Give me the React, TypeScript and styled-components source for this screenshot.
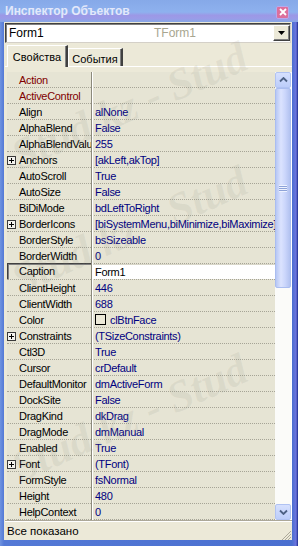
import React from "react";
import styled, { createGlobalStyle, css } from "styled-components";

const GlobalStyle = createGlobalStyle`
  html, body {
    margin: 0;
    padding: 0;
    background: #3b62cc;
  }
  body {
    font-family: "Liberation Sans", Arial, sans-serif;
    font-size: 11px;
  }
`;

type PropRow = {
  name: string;
  value?: string;
  isEvent?: boolean;
  expandable?: boolean;
  selected?: boolean;
  swatch?: boolean;
};

const rows: PropRow[] = [
  { name: "Action", isEvent: true },
  { name: "ActiveControl", isEvent: true },
  { name: "Align", value: "alNone" },
  { name: "AlphaBlend", value: "False" },
  { name: "AlphaBlendValue", value: "255" },
  { name: "Anchors", value: "[akLeft,akTop]", expandable: true },
  { name: "AutoScroll", value: "True" },
  { name: "AutoSize", value: "False" },
  { name: "BiDiMode", value: "bdLeftToRight" },
  {
    name: "BorderIcons",
    value: "[biSystemMenu,biMinimize,biMaximize]",
    expandable: true,
  },
  { name: "BorderStyle", value: "bsSizeable" },
  { name: "BorderWidth", value: "0" },
  { name: "Caption", value: "Form1", selected: true },
  { name: "ClientHeight", value: "446" },
  { name: "ClientWidth", value: "688" },
  { name: "Color", value: "clBtnFace", swatch: true },
  { name: "Constraints", value: "(TSizeConstraints)", expandable: true },
  { name: "Ctl3D", value: "True" },
  { name: "Cursor", value: "crDefault" },
  { name: "DefaultMonitor", value: "dmActiveForm" },
  { name: "DockSite", value: "False" },
  { name: "DragKind", value: "dkDrag" },
  { name: "DragMode", value: "dmManual" },
  { name: "Enabled", value: "True" },
  { name: "Font", value: "(TFont)", expandable: true },
  { name: "FormStyle", value: "fsNormal" },
  { name: "Height", value: "480" },
  { name: "HelpContext", value: "0" },
];

// faint diagonal site watermark baked into the screenshot
const watermarks = [
  { left: 14, top: 158 },
  { left: 14, top: 282 },
  { left: 14, top: 470 },
];

const PlusBox = () => (
  <svg width="9" height="9" viewBox="0 0 9 9">
    <rect x="0.5" y="0.5" width="8" height="8" fill="#f4f3ee" stroke="#3a3a3a" />
    <path d="M2 4.5h5M4.5 2v5" stroke="#000" strokeWidth="1" />
  </svg>
);

const Chevron = ({ down }: { down?: boolean }) => (
  <svg width="9" height="6" viewBox="0 0 9 6">
    <path
      d={down ? "M1 1.5l3.5 3.5 3.5-3.5" : "M1 4.5l3.5-3.5 3.5 3.5"}
      fill="none"
      stroke="#4d6185"
      strokeWidth="1.8"
    />
  </svg>
);

export default function App() {
  return (
    <>
      <GlobalStyle />
      <Window>
        <TitleBar>
          <Title>Инспектор Объектов</Title>
          <CloseButton>
            <svg width="8" height="8" viewBox="0 0 8 8">
              <path d="M1 1l6 6M7 1l-6 6" stroke="#fff" strokeWidth="1.8" />
            </svg>
          </CloseButton>
        </TitleBar>
        <Body>
          <Combo>
            <ComboName>Form1</ComboName>
            <ComboType>TForm1</ComboType>
            <DropButton>
              <svg width="7" height="4" viewBox="0 0 7 4">
                <path d="M0 0h7L3.5 4z" fill="#000" />
              </svg>
            </DropButton>
          </Combo>
          <TabStrip>
            <Tab $active>Свойства</Tab>
            <Tab>События</Tab>
          </TabStrip>
          <Page>
            <Grid>
              <Rows>
                {rows.map((r) => (
                  <Row key={r.name}>
                    <NameCell $selected={r.selected}>
                      <Expander>{r.expandable && <PlusBox />}</Expander>
                      <Name $event={r.isEvent}>{r.name}</Name>
                    </NameCell>
                    <Divider />
                    <ValueCell $selected={r.selected}>
                      {r.swatch && <Swatch />}
                      <Value $selected={r.selected}>{r.value}</Value>
                    </ValueCell>
                  </Row>
                ))}
              </Rows>
              <ScrollBar>
                <ScrollButton>
                  <Chevron />
                </ScrollButton>
                <Thumb>
                  <Grip />
                </Thumb>
                <Track />
                <ScrollButton>
                  <Chevron down />
                </ScrollButton>
              </ScrollBar>
            </Grid>
          </Page>
          <StatusBar>
            Все показано
            <SizeGrip>
              <svg width="10" height="10" viewBox="0 0 10 10">
                <path
                  d="M10 1L1 10M10 4L4 10M10 7L7 10"
                  stroke="#aca899"
                  strokeWidth="1"
                />
              </svg>
            </SizeGrip>
          </StatusBar>
        </Body>
        {watermarks.map((w, i) => (
          <Watermark key={i} style={{ left: w.left, top: w.top }}>
            Stud.kz - Stud
          </Watermark>
        ))}
      </Window>
    </>
  );
}

const Window = styled.div`
  position: relative;
  width: 298px;
  height: 546px;
  display: flex;
  flex-direction: column;
  overflow: hidden;
  background: linear-gradient(90deg, #6f93e0 0, #5479d6 4px, #4a6fd0 292px, #6c74de 296px, #1c2c8a 298px);
`;

const TitleBar = styled.div`
  flex: none;
  height: 22px;
  display: flex;
  align-items: center;
  justify-content: space-between;
  padding: 0 9px 0 5px;
  background: linear-gradient(
    180deg,
    #86a9e8 0%,
    #8eb1ee 55%,
    #9c98e6 70%,
    #9a9ce8 85%,
    #86a8e6 100%
  );
`;

const Title = styled.span`
  font-family: "Liberation Sans", Arial, sans-serif;
  font-weight: bold;
  font-size: 12px;
  color: #e3e8fa;
`;

const CloseButton = styled.div`
  width: 11px;
  height: 11px;
  display: flex;
  align-items: center;
  justify-content: center;
  margin-top: 2px;
  background: #dc6f9c;
  border: 1px solid #b7a8ec;
  border-radius: 2px;
`;

const Body = styled.div`
  flex: 1;
  display: flex;
  flex-direction: column;
  margin: 0 6px 6px 4px;
  padding: 1px 0 0 1px;
  background: #ece9d8;
`;

const Combo = styled.div`
  height: 20px;
  margin-right: 1px;
  display: flex;
  align-items: center;
  box-sizing: border-box;
  background: #fff;
  border-top: 1px solid #404040;
  border-left: 1px solid #404040;
  border-bottom: 1px solid #d4d0c8;
  border-right: 1px solid #d4d0c8;
  box-shadow: inset 1px 1px 0 #808080;
`;

const ComboName = styled.span`
  width: 145px;
  padding-left: 3px;
  font-size: 12px;
  color: #000;
`;

const ComboType = styled.span`
  flex: 1;
  font-size: 12px;
  color: #a8a690;
`;

const DropButton = styled.div`
  width: 17px;
  height: 16px;
  box-sizing: border-box;
  display: flex;
  align-items: center;
  justify-content: center;
  background: #ece9d8;
  border-top: 1px solid #fff;
  border-left: 1px solid #fff;
  border-right: 1px solid #404040;
  border-bottom: 1px solid #404040;
  box-shadow: inset -1px -1px 0 #808080;
`;

const TabStrip = styled.div`
  height: 22px;
  margin-top: 1px;
  display: flex;
  align-items: flex-end;
  padding-left: 2px;
`;

const Tab = styled.div<{ $active?: boolean }>`
  box-sizing: border-box;
  display: flex;
  align-items: center;
  justify-content: center;
  font-size: 11px;
  color: #000;
  background: #ece9d8;
  border-top: 1px solid #fff;
  border-left: 1px solid #fff;
  border-right: 2px solid #404040;
  box-shadow: inset -1px 0 0 #808080;
  white-space: nowrap;
  ${(p) =>
    p.$active
      ? css`
          width: 61px;
          height: 22px;
          margin-bottom: -1px;
          position: relative;
          z-index: 1;
          padding-top: 1px;
        `
      : css`
          width: 55px;
          height: 18px;
          padding-top: 2px;
        `}
`;

const Page = styled.div`
  flex: 1;
  display: flex;
  flex-direction: column;
  border-top: 1px solid #fff;
  padding-top: 5px;
  min-height: 0;
`;

const Grid = styled.div`
  display: flex;
  padding-left: 2px;
  border-right: 1px solid #fff;
`;

const Rows = styled.div`
  width: 268px;
  display: flex;
  flex-direction: column;
  background: #e6e4d4;
  letter-spacing: -0.3px;
`;

const Row = styled.div`
  height: 16px;
  display: flex;
  box-sizing: border-box;
  border-bottom: 1px dotted #a6a496;
`;

const NameCell = styled.div<{ $selected?: boolean }>`
  width: 84px;
  flex: none;
  display: flex;
  align-items: center;
  overflow: hidden;
  white-space: nowrap;
  ${(p) =>
    p.$selected &&
    css`
      box-shadow: inset 1px 1px 0 #404040, inset 2px 2px 0 #808080;
      margin-top: -1px;
    `}
`;

const Expander = styled.div`
  width: 12px;
  flex: none;
  display: flex;
  align-items: center;
  padding-top: 1px;
`;

const Name = styled.span<{ $event?: boolean }>`
  color: ${(p) => (p.$event ? "#800000" : "#000")};
`;

const Divider = styled.div`
  width: 2px;
  flex: none;
  background: linear-gradient(90deg, #8c8a7c 0 1px, #fff 1px 2px);
  margin-bottom: -1px;
`;

const ValueCell = styled.div<{ $selected?: boolean }>`
  flex: 1;
  min-width: 0;
  display: flex;
  align-items: center;
  padding-left: 2px;
  overflow: hidden;
  white-space: nowrap;
  ${(p) =>
    p.$selected &&
    css`
      background: #fff;
      box-shadow: inset 0 1px 0 #d8d6c8;
    `}
`;

const Value = styled.span<{ $selected?: boolean }>`
  color: ${(p) => (p.$selected ? "#000" : "#000080")};
`;

const Swatch = styled.span`
  width: 11px;
  height: 11px;
  box-sizing: border-box;
  border: 1px solid #000;
  background: #ece9d8;
  margin-right: 4px;
  flex: none;
`;

const ScrollBar = styled.div`
  width: 16px;
  display: flex;
  flex-direction: column;
  background: #fbfbf9;
`;

const ScrollButton = styled.div`
  height: 16px;
  box-sizing: border-box;
  display: flex;
  align-items: center;
  justify-content: center;
  background: linear-gradient(180deg, #d6e0fe, #bccdfa);
  border: 1px solid #b0c2f2;
  border-radius: 2px;
`;

const Thumb = styled.div`
  height: 200px;
  box-sizing: border-box;
  display: flex;
  align-items: center;
  justify-content: center;
  background: linear-gradient(90deg, #b7c7f4 0, #dbe3fe 35%, #cbd6fb 65%, #b2c2f0 100%);
  border: 1px solid #aabdf0;
  border-radius: 2px;
`;

const Grip = styled.div`
  width: 8px;
  height: 7px;
  background: repeating-linear-gradient(180deg, #eef2ff 0 1px, #8ea3d8 1px 2px);
`;

const Track = styled.div`
  flex: 1;
`;

const StatusBar = styled.div`
  position: relative;
  flex: none;
  height: 20px;
  box-sizing: border-box;
  display: flex;
  align-items: center;
  padding: 1px 0 0 2px;
  border-top: 1px solid #aca899;
  box-shadow: inset 0 1px 0 #fff;
  color: #000;
  font-size: 11.5px;
`;

const SizeGrip = styled.div`
  position: absolute;
  right: 1px;
  bottom: 0;
  width: 10px;
  height: 10px;
  display: flex;
`;

const Watermark = styled.div`
  position: absolute;
  pointer-events: none;
  font-family: "Liberation Serif", "Times New Roman", serif;
  font-style: italic;
  font-weight: bold;
  font-size: 44px;
  line-height: 44px;
  white-space: nowrap;
  color: rgba(140, 140, 130, 0.12);
  transform: translateY(-22px) rotate(-24deg);
  transform-origin: left center;
  width: 340px;
`;
